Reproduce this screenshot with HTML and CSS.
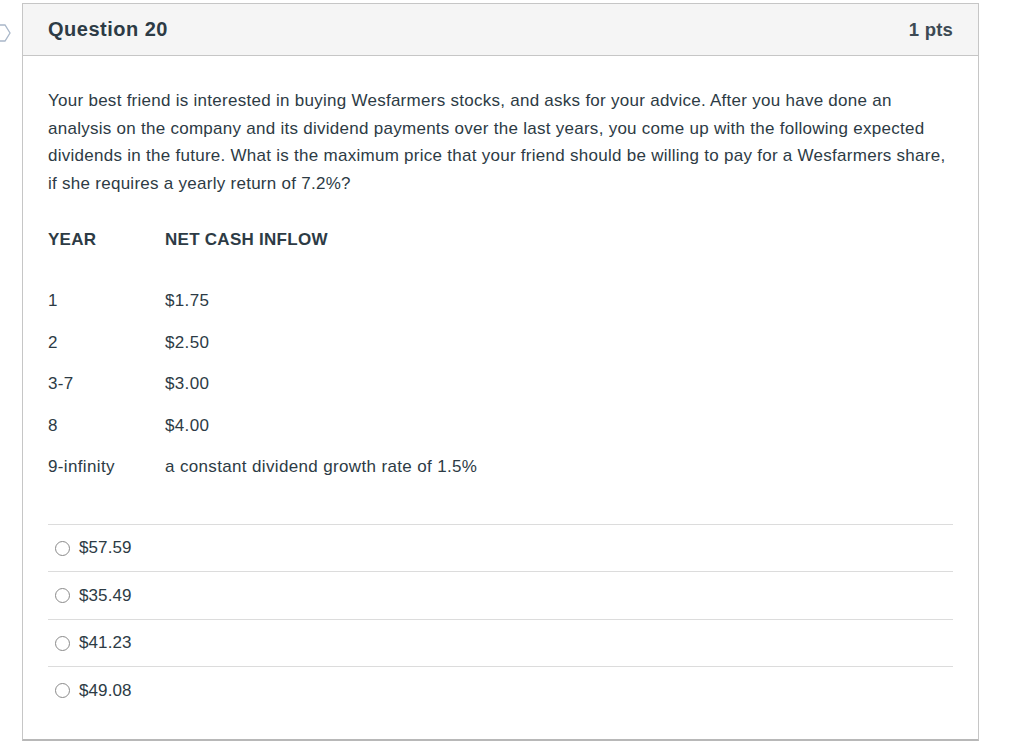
FILE: index.html
```html
<!DOCTYPE html>
<html lang="en">
<head>
<meta charset="utf-8">
<title>Question 20</title>
<link rel="stylesheet" href="styles.css">
</head>
<body>
<div class="page">
  <div class="nav-mark">
    <svg width="12" height="18" viewBox="0 0 12 18"><polyline points="0,1 5,1 10,9 5,17 0,17" fill="none" stroke="#a9b7c9" stroke-width="1.3"/></svg>
  </div>
  <div class="question">
    <div class="q-header">
      <span class="q-title">Question 20</span>
      <span class="q-pts">1 pts</span>
    </div>
    <div class="q-body">
      <p class="q-text">Your best friend is interested in buying Wesfarmers stocks, and asks for your advice. After you have done an analysis on the company and its dividend payments over the last years, you come up with the following expected dividends in the future. What is the maximum price that your friend should be willing to pay for a Wesfarmers share, if she requires a yearly return of 7.2%?</p>
      <table class="cash">
        <thead>
          <tr><th class="c-year">YEAR</th><th>NET CASH INFLOW</th></tr>
        </thead>
        <tbody>
          <tr><td>1</td><td>$1.75</td></tr>
          <tr><td>2</td><td>$2.50</td></tr>
          <tr><td>3-7</td><td>$3.00</td></tr>
          <tr><td>8</td><td>$4.00</td></tr>
          <tr><td>9-infinity</td><td>a constant dividend growth rate of 1.5%</td></tr>
        </tbody>
      </table>
      <div class="answers">
        <label class="answer"><span class="radio"></span><span>$57.59</span></label>
        <label class="answer"><span class="radio"></span><span>$35.49</span></label>
        <label class="answer"><span class="radio"></span><span>$41.23</span></label>
        <label class="answer"><span class="radio"></span><span>$49.08</span></label>
      </div>
    </div>
  </div>
</div>
</body>
</html>
```
FILE: styles.css
```css
* { box-sizing: border-box; }
html, body { margin: 0; padding: 0; background: #fff; }
body {
  font-family: "Liberation Sans", Arial, Helvetica, sans-serif;
  color: #2d3b45;
}
.page {
  display: flex;
  align-items: flex-start;
  padding-top: 3px;
}
.nav-mark {
  width: 22px;
  flex: 0 0 22px;
  padding-top: 21px;
}
.nav-mark svg { display: block; }
.question {
  width: 957px;
  border: 1px solid #c6c6c6;
  border-bottom: 2px solid #b8b8b8;
  background: #fff;
}
.q-header {
  height: 52px;
  background: #f5f5f5;
  border-bottom: 1px solid #c6c6c6;
  display: flex;
  align-items: center;
  justify-content: space-between;
  padding: 0 25px;
  font-weight: bold;
}
.q-title { font-size: 20px; letter-spacing: 0.5px; }
.q-pts { font-size: 18.5px; color: #3d4a54; letter-spacing: 0.2px; }
.q-body {
  padding: 31px 25px 25px;
  font-size: 17px;
}
.q-text {
  margin: 0;
  line-height: 27.5px;
  letter-spacing: 0.27px;
}
.cash {
  border-collapse: collapse;
  margin-top: 22px;
  line-height: 41.5px;
  letter-spacing: 0.35px;
}
.cash th, .cash td {
  padding: 0;
  text-align: left;
  vertical-align: middle;
}
.cash th { font-weight: bold; padding-bottom: 19.5px; letter-spacing: 0.27px; }
.cash .c-year { width: 117px; }
.answers { margin-top: 36px; }
.answer {
  display: flex;
  align-items: center;
  gap: 9px;
  height: 47.5px;
  border-top: 1px solid #dcdcdc;
  padding-left: 7px;
  padding-top: 1px;
  letter-spacing: 0.1px;
}
.radio {
  width: 15px;
  height: 15px;
  border: 1px solid #8a8a8a;
  border-radius: 50%;
  background: #fff;
}
```
